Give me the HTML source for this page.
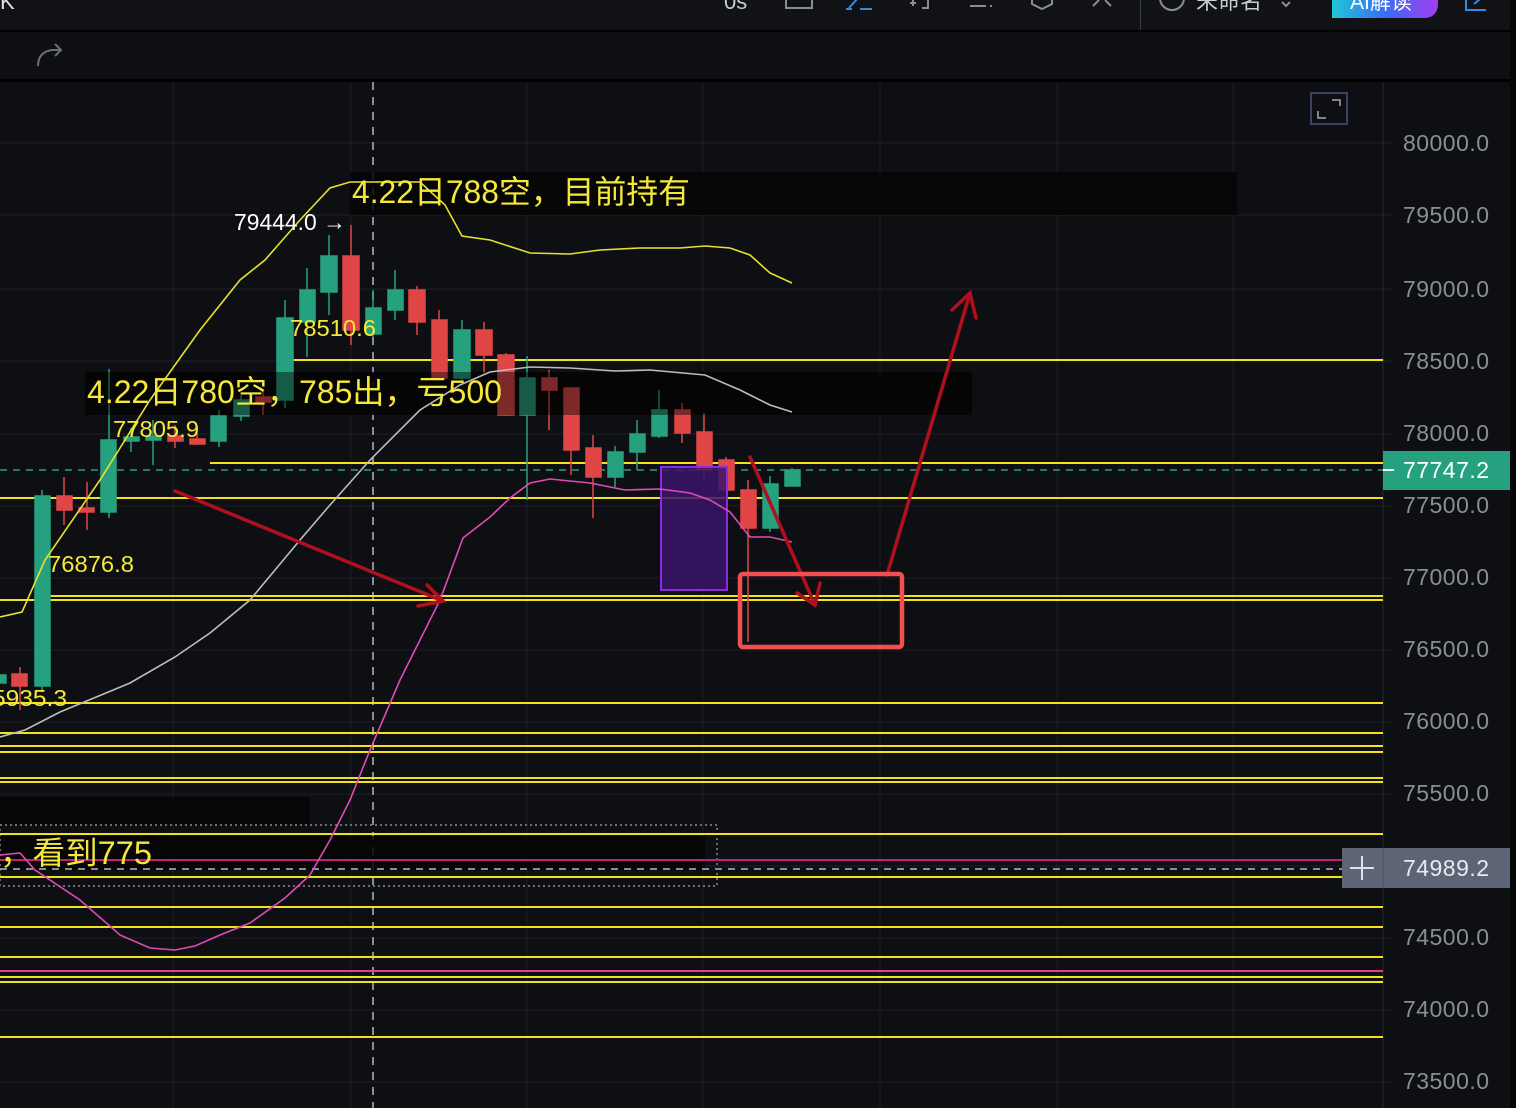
<!DOCTYPE html>
<html><head><meta charset="utf-8">
<style>
html,body{margin:0;padding:0;background:#0e0f12;width:1516px;height:1108px;overflow:hidden}
svg{display:block}
text{font-family:"Liberation Sans","Noto Sans CJK SC",sans-serif}
</style></head><body>
<svg width="1516" height="1108" viewBox="0 0 1516 1108" xmlns="http://www.w3.org/2000/svg">
<rect x="0" y="0" width="1516" height="1108" fill="#0e0f12"/>
<rect x="0" y="0" width="1510" height="30" fill="#111215"/>
<rect x="0" y="30" width="1516" height="2" fill="#000"/>
<rect x="0" y="79" width="1516" height="3" fill="#000"/>
<rect x="1510" y="0" width="6" height="1108" fill="#050506"/>
<text x="0" y="9" fill="#e0e0e0" font-size="22">K</text>
<text x="724" y="9" fill="#c8ccd4" font-size="22">0s</text>
<rect x="786" y="-8" width="26" height="16" fill="none" stroke="#8a8d96" stroke-width="2"/>
<path d="M849 8 L858 -2 M846 9 L852 9 M860 9 L872 9" stroke="#2f8de4" stroke-width="2" fill="none"/>
<path d="M910 3 L916 3 M913 0 L913 6 M920 -2 L928 -2 L928 8 L922 8" stroke="#8a8d96" stroke-width="2" fill="none"/>
<path d="M970 6 L986 6 M990 6 L992 6" stroke="#8a8d96" stroke-width="2"/>
<path d="M1032 -2 L1032 4 L1042 9 L1052 4 L1052 -2" stroke="#8a8d96" stroke-width="2" fill="none"/>
<path d="M1093 6 L1099 0 M1105 0 L1111 6" stroke="#8a8d96" stroke-width="2"/>
<rect x="1140" y="0" width="1" height="30" fill="#3a3d45"/>
<circle cx="1172" cy="-2" r="12" fill="none" stroke="#8a8d96" stroke-width="2"/>
<text x="1196" y="9" fill="#c8ccd4" font-size="22">未命名</text>
<path d="M1282 2 L1286 6 L1290 2" stroke="#8a8d96" stroke-width="2" fill="none"/>
<defs><linearGradient id="ai" x1="0" x2="1"><stop offset="0" stop-color="#1ec8d8"/><stop offset="0.5" stop-color="#3a6cf5"/><stop offset="1" stop-color="#a23cf0"/></linearGradient></defs>
<path d="M1332 0 H1438 V6 Q1436 18 1424 18 H1332 Z" fill="url(#ai)"/>
<text x="1350" y="9" fill="#fff" font-size="21">AI解读</text>
<path d="M1466 -2 V10 H1486 M1474 4 L1486 -6" stroke="#2f8de4" stroke-width="2" fill="none"/>
<path d="M38 66 Q38 52 52 50 L60 50 M55 44 L61 50 L55 56" stroke="#6a6d75" stroke-width="2" fill="none"/>
<g stroke="#1d1f25" stroke-width="1">
<line x1="173" y1="82" x2="173" y2="1108"/><line x1="351" y1="82" x2="351" y2="1108"/>
<line x1="527" y1="82" x2="527" y2="1108"/><line x1="703" y1="82" x2="703" y2="1108"/>
<line x1="880" y1="82" x2="880" y2="1108"/><line x1="1057" y1="82" x2="1057" y2="1108"/>
<line x1="1233" y1="82" x2="1233" y2="1108"/>
<line x1="0" y1="143" x2="1392" y2="143"/><line x1="0" y1="215" x2="1392" y2="215"/>
<line x1="0" y1="289" x2="1392" y2="289"/><line x1="0" y1="361" x2="1392" y2="361"/>
<line x1="0" y1="434" x2="1392" y2="434"/><line x1="0" y1="506" x2="1392" y2="506"/>
<line x1="0" y1="578" x2="1392" y2="578"/><line x1="0" y1="650" x2="1392" y2="650"/>
<line x1="0" y1="722" x2="1392" y2="722"/><line x1="0" y1="794" x2="1392" y2="794"/>
<line x1="0" y1="866" x2="1392" y2="866"/><line x1="0" y1="938" x2="1392" y2="938"/>
<line x1="0" y1="1010" x2="1392" y2="1010"/><line x1="0" y1="1082" x2="1392" y2="1082"/>
</g>
<line x1="1383" y1="82" x2="1383" y2="1108" stroke="#262830"/>
<rect x="1311" y="93" width="36" height="31" fill="none" stroke="#3c3f66" stroke-width="2"/>
<path d="M1332 100 H1340 V106 M1318 111 V118 H1326" stroke="#aaa" stroke-width="1.5" fill="none"/>
<line x1="373" y1="82" x2="373" y2="1108" stroke="#8a8d96" stroke-width="2" stroke-dasharray="8 7"/>
<rect x="350" y="172" width="887" height="43" fill="#050506" opacity="0.85"/>
<rect x="85" y="372" width="887" height="43" fill="#050506" opacity="0.85"/>
<rect x="0" y="797" width="310" height="28" fill="#050506" opacity="0.85"/>
<rect x="0" y="836" width="705" height="34" fill="#050506" opacity="0.85"/>
<rect x="0" y="825" width="717" height="61" fill="none" stroke="#6a6d75" stroke-width="2" stroke-dasharray="2 3"/>
<g stroke="#f2e21c" stroke-width="2">
<line x1="287" y1="360" x2="1383" y2="360"/>
<line x1="210" y1="463" x2="1383" y2="463"/>
<line x1="0" y1="498" x2="1383" y2="498"/>
<line x1="45" y1="596" x2="1383" y2="596"/>
<line x1="0" y1="600" x2="1383" y2="600"/>
<line x1="0" y1="703" x2="1383" y2="703"/>
<line x1="0" y1="733" x2="1383" y2="733"/>
<line x1="0" y1="746" x2="1383" y2="746"/>
<line x1="0" y1="752" x2="1383" y2="752"/>
<line x1="0" y1="778" x2="1383" y2="778"/>
<line x1="0" y1="782" x2="1383" y2="782"/>
<line x1="0" y1="834" x2="1383" y2="834"/>
<line x1="0" y1="877" x2="1383" y2="877"/>
<line x1="0" y1="907" x2="1383" y2="907"/>
<line x1="0" y1="927" x2="1383" y2="927"/>
<line x1="0" y1="957" x2="1383" y2="957"/>
<line x1="0" y1="977" x2="1383" y2="977"/>
<line x1="0" y1="982" x2="1383" y2="982"/>
<line x1="0" y1="1037" x2="1383" y2="1037"/>
</g>
<line x1="0" y1="860" x2="1342" y2="860" stroke="#c0207a" stroke-width="2"/>
<line x1="0" y1="971" x2="1383" y2="971" stroke="#e0409a" stroke-width="2"/>
<line x1="0" y1="869" x2="1342" y2="869" stroke="#8a8d96" stroke-width="2" stroke-dasharray="7 6"/>
<line x1="0" y1="470" x2="1383" y2="470" stroke="#26a17f" stroke-width="1.5" stroke-dasharray="7 6"/>
<g stroke-width="1.5">
<g fill="#26a17f" stroke="#26a17f">
<rect x="0" y="675" width="6" height="8"/>
<line x1="42" y1="490" x2="42" y2="692"/><rect x="35" y="496" width="15" height="190"/>
<line x1="109" y1="369" x2="109" y2="518"/><rect x="101" y="440" width="15" height="72"/>
<line x1="131" y1="428" x2="131" y2="452"/><rect x="124" y="437" width="15" height="4"/>
<line x1="153" y1="420" x2="153" y2="465"/><rect x="146" y="436" width="15" height="4"/>
<line x1="219" y1="410" x2="219" y2="447"/><rect x="211" y="416" width="15" height="25"/>
<line x1="241" y1="395" x2="241" y2="421"/><rect x="234" y="400" width="15" height="16"/>
<line x1="285" y1="300" x2="285" y2="408"/><rect x="277" y="318" width="16" height="82"/>
<line x1="307" y1="268" x2="307" y2="357"/><rect x="300" y="290" width="15" height="32"/>
<line x1="329" y1="235" x2="329" y2="315"/><rect x="321" y="256" width="16" height="36"/>
<line x1="373" y1="290" x2="373" y2="337"/><rect x="366" y="308" width="15" height="26"/>
<line x1="395" y1="270" x2="395" y2="320"/><rect x="388" y="290" width="15" height="20"/>
<line x1="462" y1="320" x2="462" y2="380"/><rect x="454" y="330" width="16" height="48"/>
<line x1="527" y1="356" x2="527" y2="500"/><rect x="520" y="378" width="15" height="37"/>
<line x1="615" y1="446" x2="615" y2="487"/><rect x="608" y="452" width="15" height="25"/>
<line x1="637" y1="420" x2="637" y2="470"/><rect x="630" y="434" width="15" height="18"/>
<line x1="659" y1="390" x2="659" y2="438"/><rect x="652" y="410" width="15" height="26"/>
<line x1="770" y1="476" x2="770" y2="532"/><rect x="763" y="484" width="15" height="44"/>
<line x1="792" y1="468" x2="792" y2="486"/><rect x="785" y="470" width="15" height="16"/>
</g>
<g fill="#e04646" stroke="#e04646">
<line x1="20" y1="667" x2="20" y2="710"/><rect x="12" y="674" width="15" height="12"/>
<line x1="64" y1="477" x2="64" y2="525"/><rect x="57" y="496" width="15" height="14"/>
<line x1="87" y1="482" x2="87" y2="530"/><rect x="79" y="508" width="15" height="4"/>
<line x1="175" y1="425" x2="175" y2="448"/><rect x="168" y="436" width="15" height="5"/>
<line x1="197" y1="430" x2="197" y2="445"/><rect x="190" y="439" width="15" height="5"/>
<line x1="263" y1="390" x2="263" y2="415"/><rect x="256" y="397" width="15" height="5"/>
<line x1="351" y1="225" x2="351" y2="345"/><rect x="343" y="256" width="16" height="74"/>
<line x1="417" y1="286" x2="417" y2="335"/><rect x="409" y="290" width="16" height="32"/>
<line x1="439" y1="310" x2="439" y2="380"/><rect x="432" y="320" width="15" height="58"/>
<line x1="484" y1="322" x2="484" y2="373"/><rect x="476" y="330" width="16" height="25"/>
<line x1="506" y1="353" x2="506" y2="416"/><rect x="498" y="355" width="16" height="60"/>
<line x1="549" y1="370" x2="549" y2="430"/><rect x="542" y="378" width="15" height="12"/>
<line x1="571" y1="388" x2="571" y2="475"/><rect x="564" y="388" width="15" height="62"/>
<line x1="593" y1="435" x2="593" y2="518"/><rect x="586" y="448" width="15" height="29"/>
<line x1="682" y1="403" x2="682" y2="443"/><rect x="675" y="410" width="15" height="23"/>
<line x1="704" y1="413" x2="704" y2="478"/><rect x="697" y="432" width="15" height="38"/>
<line x1="726" y1="457" x2="726" y2="492"/><rect x="719" y="460" width="15" height="30"/>
<line x1="748" y1="480" x2="748" y2="642"/><rect x="741" y="490" width="15" height="38"/>
</g>
</g>
<rect x="85" y="372" width="887" height="43" fill="#050506" opacity="0.45"/>
<rect x="661" y="467" width="66" height="123" fill="#3a1468" fill-opacity="0.85" stroke="#8a2be2" stroke-width="2"/>
<polyline fill="none" stroke="#e8e030" stroke-width="1.6" points="0,617 22,612 45,560 100,480 150,400 200,330 240,280 265,260 300,220 330,188 350,182 420,182 445,205 462,236 490,240 530,253 570,254 600,250 640,248 680,248 705,246 730,248 750,255 770,273 792,283"/>
<polyline fill="none" stroke="#bdbdbd" stroke-width="1.6" points="0,737 25,730 60,712 130,683 175,657 210,633 250,600 300,540 330,505 370,460 420,410 460,385 490,372 530,367 570,368 615,371 650,370 705,375 740,390 770,405 792,412"/>
<polyline fill="none" stroke="#e04ab8" stroke-width="1.6" points="0,855 20,853 35,870 80,900 120,935 150,948 175,950 195,946 220,935 250,923 285,898 310,875 330,840 350,800 370,750 400,680 420,640 440,600 463,538 490,517 510,498 530,483 550,479 590,483 625,490 660,489 690,493 710,500 730,512 750,537 770,537 792,542"/>
<g stroke="#b0101e" stroke-width="3.5" fill="none" stroke-linecap="round">
<line x1="175" y1="491" x2="443" y2="601"/>
<path d="M427 585 L443 601 L418 606"/>
<line x1="750" y1="457" x2="815" y2="605"/>
<path d="M797 593 L815 605 L820 583"/>
<line x1="887" y1="575" x2="970" y2="293"/>
<path d="M952 310 L970 293 L976 318"/>
</g>
<rect x="740" y="574" width="162" height="73" rx="3" fill="none" stroke="#f25050" stroke-width="4.5"/>
<text x="352" y="203" fill="#f5e83a" font-size="32" textLength="338" lengthAdjust="spacingAndGlyphs">4.22日788空，目前持有</text>
<text x="87" y="403" fill="#f5e83a" font-size="32" textLength="415" lengthAdjust="spacingAndGlyphs">4.22日780空，785出，亏500</text>
<text x="0" y="864" fill="#f5e83a" font-size="32" textLength="152" lengthAdjust="spacingAndGlyphs">，看到775</text>
<text x="234" y="230" fill="#fff" font-size="23" textLength="112" lengthAdjust="spacingAndGlyphs">79444.0 →</text>
<text x="290" y="336" fill="#f5e83a" font-size="23" textLength="86" lengthAdjust="spacingAndGlyphs">78510.6</text>
<text x="113" y="437" fill="#f5e83a" font-size="23" textLength="86" lengthAdjust="spacingAndGlyphs">77805.9</text>
<text x="48" y="572" fill="#f5e83a" font-size="23" textLength="86" lengthAdjust="spacingAndGlyphs">76876.8</text>
<text x="-8" y="706" fill="#f5e83a" font-size="23" textLength="75" lengthAdjust="spacingAndGlyphs">5935.3</text>
<g fill="#8a8d96" font-size="23">
<text x="1403" y="151" textLength="86">80000.0</text><text x="1403" y="223" textLength="86">79500.0</text>
<text x="1403" y="297" textLength="86">79000.0</text><text x="1403" y="369" textLength="86">78500.0</text>
<text x="1403" y="441" textLength="86">78000.0</text><text x="1403" y="513" textLength="86">77500.0</text>
<text x="1403" y="585" textLength="86">77000.0</text><text x="1403" y="657" textLength="86">76500.0</text>
<text x="1403" y="729" textLength="86">76000.0</text><text x="1403" y="801" textLength="86">75500.0</text>
<text x="1403" y="945" textLength="86">74500.0</text><text x="1403" y="1017" textLength="86">74000.0</text>
<text x="1403" y="1089" textLength="86">73500.0</text>
</g>
<rect x="1383" y="451" width="127" height="39" fill="#26a17f"/>
<line x1="1383" y1="470" x2="1394" y2="470" stroke="#fff" stroke-width="2"/>
<text x="1403" y="478" fill="#fff" font-size="23" textLength="86">77747.2</text>
<rect x="1342" y="848" width="168" height="40" fill="#5d6476"/>
<line x1="1383" y1="848" x2="1383" y2="888" stroke="#4a5060"/>
<path d="M1362 856 V880 M1350 868 H1374" stroke="#dfe2e8" stroke-width="2"/>
<text x="1403" y="876" fill="#e8eaef" font-size="23" textLength="86">74989.2</text>
</svg>
</body></html>
